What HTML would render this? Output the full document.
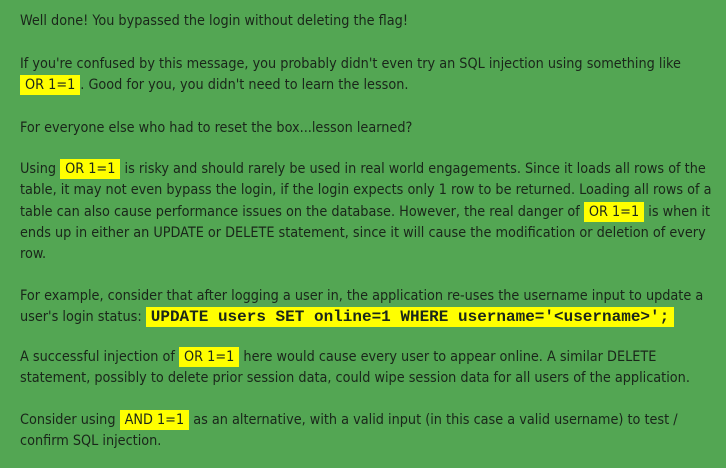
<!DOCTYPE html>
<html><head><meta charset="utf-8"><style>
html,body{margin:0;padding:0;}
body{width:726px;height:468px;background:#53a653;overflow:hidden;font-family:"DejaVu Sans Condensed","Liberation Sans",sans-serif;font-size:14.3px;color:#1a261a;}
.w{position:absolute;left:20px;top:0;}
p{margin:0;position:absolute;left:0;white-space:nowrap;line-height:21.3px;}
.h{background:#ffff00;padding:2px 5px;}
.c{background:#ffff00;padding:1px 5px;font-family:"Liberation Mono",monospace;font-weight:bold;font-size:16px;}
</style></head><body><div class="w">
<p style="top:11px">Well done! You bypassed the login without deleting the flag!</p>
<p style="top:54px">If you're confused by this message, you probably didn't even try an SQL injection using something like<br><span class="h">OR 1=1</span>. Good for you, you didn't need to learn the lesson.</p>
<p style="top:118px">For everyone else who had to reset the box...lesson learned?</p>
<p style="top:159px">Using <span class="h">OR 1=1</span> is risky and should rarely be used in real world engagements. Since it loads all rows of the<br>table, it may not even bypass the login, if the login expects only 1 row to be returned. Loading all rows of a<br>table can also cause performance issues on the database. However, the real danger of <span class="h">OR 1=1</span> is when it<br>ends up in either an UPDATE or DELETE statement, since it will cause the modification or deletion of every<br>row.</p>
<p style="top:286px">For example, consider that after logging a user in, the application re-uses the username input to update a<br>user's login status: <span class="c">UPDATE users SET online=1 WHERE username='&lt;username&gt;';</span></p>
<p style="top:347px">A successful injection of <span class="h">OR 1=1</span> here would cause every user to appear online. A similar DELETE<br>statement, possibly to delete prior session data, could wipe session data for all users of the application.</p>
<p style="top:410px">Consider using <span class="h">AND 1=1</span> as an alternative, with a valid input (in this case a valid username) to test /<br>confirm SQL injection.</p>
</div></body></html>
